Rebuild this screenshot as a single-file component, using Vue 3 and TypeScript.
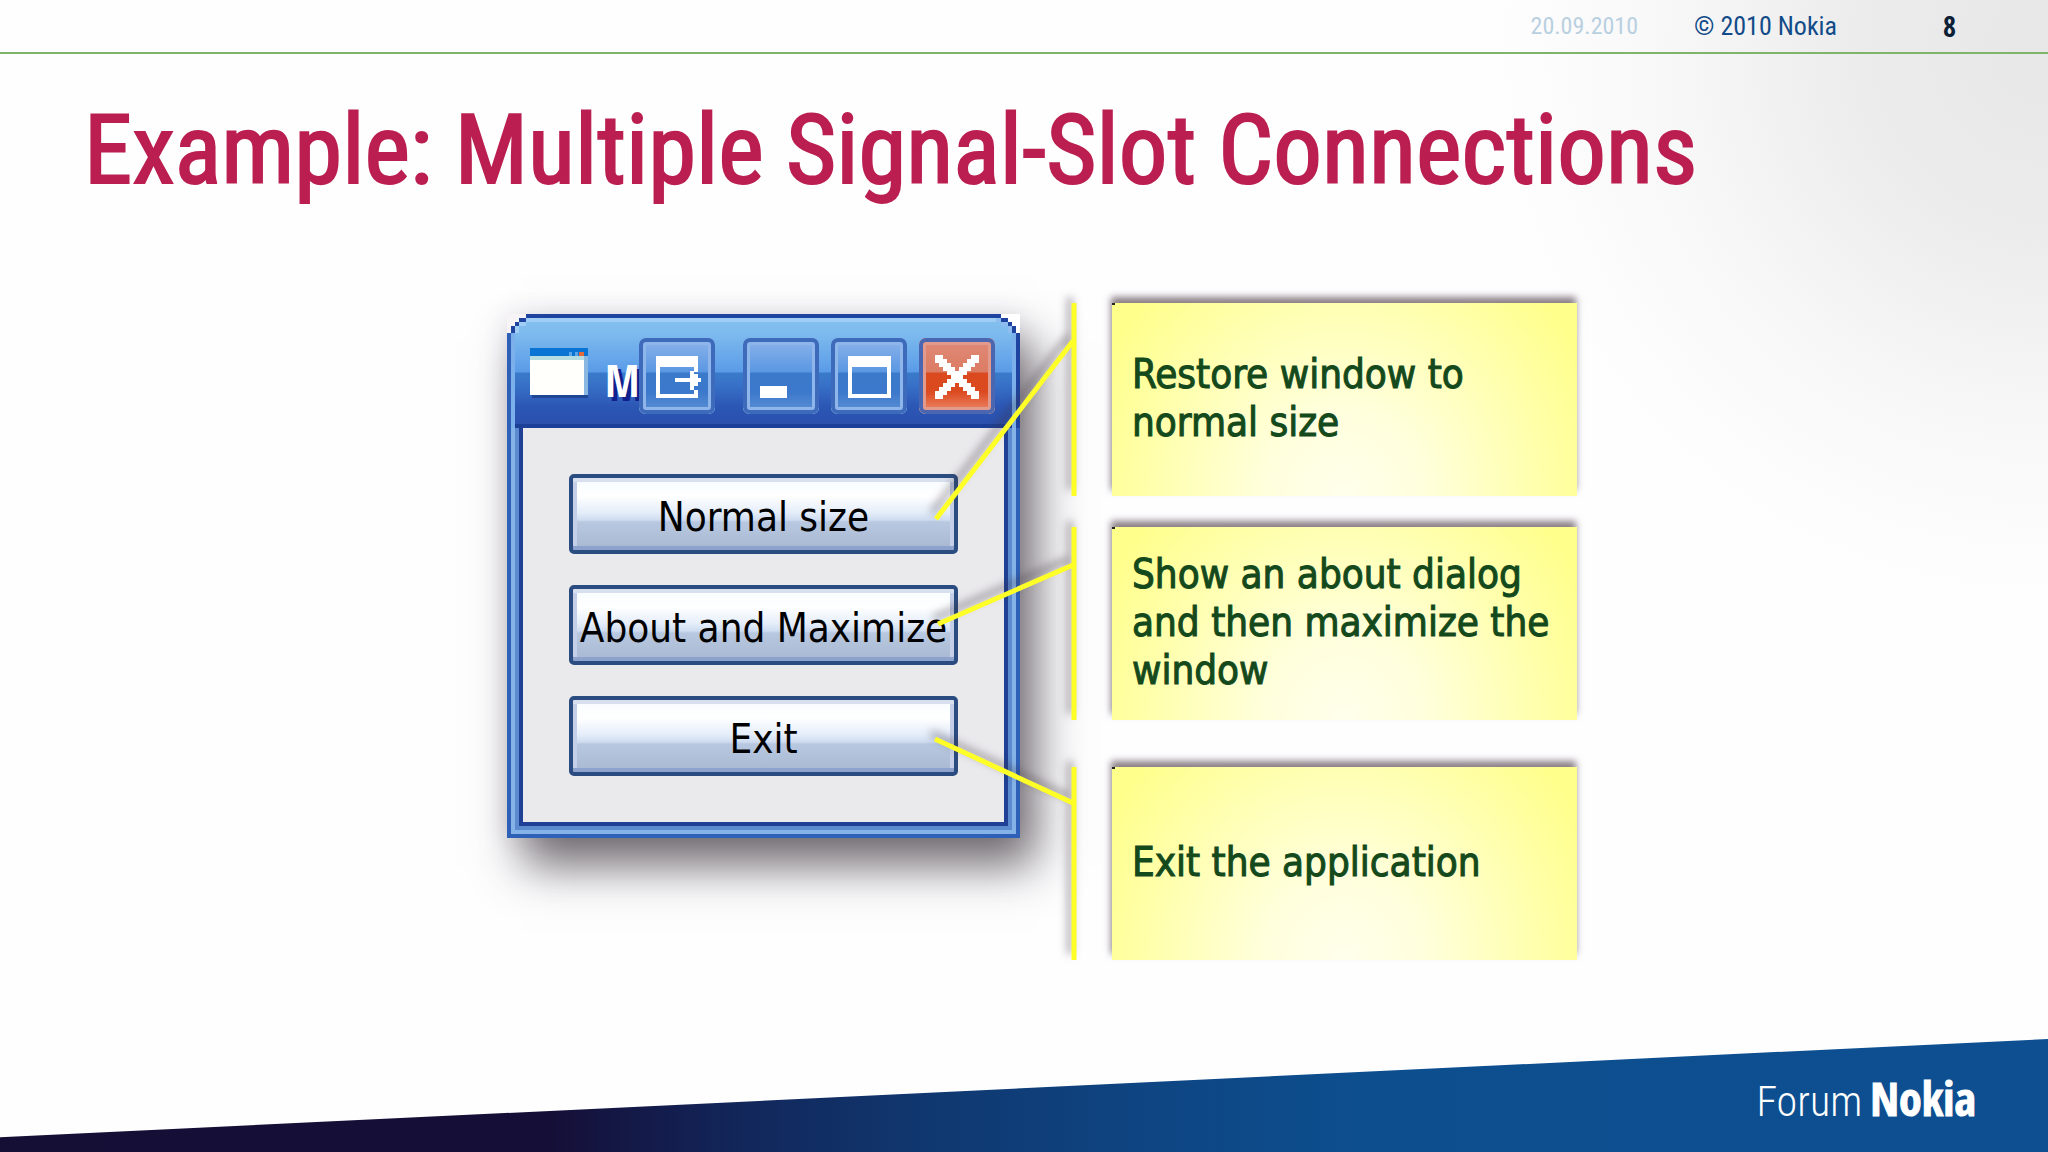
<script setup lang="ts">
interface Note {
  id: string
  text: string
}

interface Point {
  x: number
  y: number
}

interface Connector {
  id: string
  bar: { top: number; bottom: number }
  from: Point
  to: Point
}

const title = 'Example: Multiple Signal-Slot Connections'

const actions: string[] = ['Normal size', 'About and Maximize', 'Exit']

const notes: Note[] = [
  { id: 'restore', text: 'Restore window to normal size' },
  { id: 'about', text: 'Show an about dialog and then maximize the window' },
  { id: 'exit', text: 'Exit the application' },
]

// Coordinates are relative to the diagram's top left corner.
const connectors: Connector[] = [
  { id: 'restore', bar: { top: 0, bottom: 193 }, from: { x: 566, y: 38 }, to: { x: 429, y: 216 } },
  { id: 'about', bar: { top: 224, bottom: 417 }, from: { x: 566, y: 262 }, to: { x: 431, y: 321 } },
  { id: 'exit', bar: { top: 464, bottom: 657 }, from: { x: 566, y: 500 }, to: { x: 428, y: 436 } },
]

// Rows of the stair-stepped cross on the close button.
const crossCells: { x: number; y: number; w: number }[] = []
for (let row = 0; row < 11; row++) {
  for (const col of [row, 10 - row]) {
    const start = Math.max(0, col - 1)
    const end = Math.min(10, col + 1)
    crossCells.push({ x: 16 + start * 4, y: 17 + row * 4, w: (end - start + 1) * 4 })
  }
}
</script>

<template>
  <main class="slide">
    <header class="topbar">
      <span class="date">20.09.2010</span>
      <span class="copyright">© 2010 Nokia</span>
      <span class="page">8</span>
    </header>

    <h1 class="title">{{ title }}</h1>

    <section class="stage">
      <div class="diagram">
        <div class="window">
          <div class="titlebar">
            <svg class="corner" viewBox="0 0 24 24" aria-hidden="true">
              <path d="M0 0H19V4H12V8H8V12H4V19H0Z" fill="#f6f4f7" />
              <path d="M19 0H24V4H19V8H12V4H19ZM8 8H12V12H8ZM4 12H8V19H4Z" fill="#1f449f" />
              <path d="M19 4H24V8H19ZM12 8H19V12H12ZM8 12H12V19H8Z" fill="#9fcdf5" />
            </svg>
            <svg class="corner corner-right" viewBox="0 0 24 24" aria-hidden="true">
              <path d="M0 0H19V4H12V8H8V12H4V19H0Z" fill="#ffffff" />
              <path d="M19 0H24V4H19V8H12V4H19ZM8 8H12V12H8ZM4 12H8V19H4Z" fill="#1f449f" />
              <path d="M19 4H24V8H19ZM12 8H19V12H12ZM8 12H12V19H8Z" fill="#8fbdf0" />
            </svg>

            <svg class="app-icon" viewBox="0 0 58 50" aria-hidden="true">
              <rect x="2" y="4" width="56" height="46" fill="#1f4796" />
              <rect width="58" height="9" fill="#0a74d4" />
              <rect x="39" y="4" width="3" height="4" fill="#5ba6e6" />
              <rect x="45" y="4" width="3" height="4" fill="#5ba6e6" />
              <rect x="49" y="4" width="5" height="4" fill="#e56a3a" />
              <rect y="8" width="54" height="39" fill="#fffffb" />
              <rect y="8" width="54" height="4" fill="#b5dce0" />
              <rect x="54" y="8" width="4" height="39" fill="#8ab8e0" />
            </svg>
            <span class="caption">M</span>

            <button class="control" type="button" aria-label="Send to">
              <svg viewBox="0 0 76 76" aria-hidden="true">
                <path
                  fill="#fff"
                  d="M17 18H59V34H55V29H21V56H55V52H59V60H17ZM36 40H51V33H55V36H59V40H62V44H59V48H55V52H51V44H36Z"
                />
              </svg>
            </button>
            <div class="controls">
              <button class="control" type="button" aria-label="Minimize">
                <svg viewBox="0 0 76 76" aria-hidden="true">
                  <rect x="17" y="48" width="27" height="12" fill="#fff" />
                </svg>
              </button>
              <button class="control" type="button" aria-label="Maximize">
                <svg viewBox="0 0 76 76" aria-hidden="true">
                  <path fill="#fff" fill-rule="evenodd" d="M17 18H60V60H17ZM21 29V56H56V29Z" />
                </svg>
              </button>
              <button class="control close" type="button" aria-label="Close">
                <svg viewBox="0 0 76 76" aria-hidden="true">
                  <rect
                    v-for="(cell, i) in crossCells"
                    :key="i"
                    :x="cell.x"
                    :y="cell.y"
                    :width="cell.w"
                    height="4"
                    fill="#fff"
                  />
                </svg>
              </button>
            </div>
          </div>

          <div class="client">
            <button v-for="label in actions" :key="label" class="push" type="button">{{ label }}</button>
          </div>
        </div>

        <div class="notes">
          <p v-for="note in notes" :key="note.id" class="note">{{ note.text }}</p>
        </div>

        <svg class="connectors" aria-hidden="true">
          <g v-for="c in connectors" :key="c.id">
            <line x1="567" :y1="c.bar.top" x2="567" :y2="c.bar.bottom" />
            <line :x1="c.from.x" :y1="c.from.y" :x2="c.to.x" :y2="c.to.y" />
          </g>
        </svg>
      </div>
    </section>

    <footer class="footer">
      <div class="logo"><span class="logo-light">Forum</span><span class="logo-bold">Nokia</span></div>
    </footer>
  </main>
</template>

<style>
body {
  margin: 0;
}
</style>

<style scoped>
.slide {
  display: flex;
  flex-direction: column;
  min-height: 100vh;
  overflow: hidden;
  background: radial-gradient(ellipse 27% 48% at 100% 4%, #e7e7e7 0%, #ececed 35%, #f8f8f9 70%, #fefeff 100%);
  font-family: "DejaVu Sans Condensed", "Noto Sans", sans-serif;
}

.topbar {
  display: flex;
  align-items: center;
  justify-content: flex-end;
  height: 52px;
  padding-right: 92px;
  border-bottom: 2px solid #7fb46a;
  font: 24px/52px "Roboto Condensed", "Noto Sans", sans-serif;
}

.date {
  color: #b9d0e0;
}

.copyright {
  margin: 0 106px 0 56px;
  color: #114b88;
  font-size: 26px;
}

.page {
  color: #0c2036;
  font: 700 28px/52px "Open Sans Condensed", "Noto Sans", sans-serif;
}

.title {
  margin: 0;
  padding: 36px 84px 0;
  color: #bb1e50;
  font: 400 97px/120px "Roboto Condensed", "Noto Sans", sans-serif;
  -webkit-text-stroke: 2px #bb1e50;
}

.stage {
  display: flex;
  justify-content: center;
  padding: 93px 0 40px 36px;
}

.diagram {
  position: relative;
  display: flex;
  gap: 92px;
}

.window {
  align-self: flex-start;
  width: 513px;
  margin-top: 11px;
  background: #fff;
  box-shadow: 16px 28px 44px rgba(45, 38, 45, 0.68), 0 0 24px rgba(60, 40, 70, 0.1);
}

.titlebar {
  position: relative;
  display: flex;
  align-items: flex-start;
  box-sizing: border-box;
  height: 114px;
  padding: 24px 25px 0 23px;
  background: linear-gradient(#86c4ee 0, #7dbaee 20px, #5a9be8 58px, #3a7aca 59px, #3872c8 70px, #2c57b5 92px, #2b50ae 110px, #1c3f97 110px);
  box-shadow: inset 0 4px #1f449f, inset 4px 0 #2e60b8, inset -4px 0 #1f449f, inset 0 8px #9fcdf5, inset 8px 0 #7cb0ea, inset -8px 0 #7cb0ea;
}

.corner {
  position: absolute;
  top: 0;
  left: 0;
  width: 24px;
  height: 24px;
  shape-rendering: crispEdges;
}

.corner-right {
  right: 0;
  left: auto;
  transform: scaleX(-1);
}

.app-icon {
  width: 58px;
  height: 50px;
  margin: 10px 17px 0 0;
  shape-rendering: crispEdges;
}

.caption {
  width: 34px;
  color: #fff;
  font: 700 44px/84px "Open Sans Condensed", "Noto Sans", sans-serif;
  text-shadow: 4px 4px #10208c;
}

.controls {
  display: flex;
  gap: 12px;
  margin-left: auto;
}

.control {
  position: relative;
  flex: none;
  width: 76px;
  height: 76px;
  padding: 0;
  border: 0;
  border-radius: 7px;
  background: linear-gradient(#8db4ea 0, #6fa3e6 20px, #5a97e2 34px, #3b7aca 35px, #3c78cc 54px, #5f93d4 76px);
  box-shadow: inset 0 0 0 4px #3d6abb, inset 0 -4px #a5d0f2, inset 0 0 0 7px #8fb6ea;
}

.control svg {
  display: block;
  width: 76px;
  height: 76px;
  shape-rendering: crispEdges;
}

.close {
  background: linear-gradient(#e08a78 0, #dc7c64 34px, #da4a1e 35px, #dc4a20 54px, #ee9070 76px);
  box-shadow: inset 0 0 0 4px #4a66b0, inset 0 -4px #f0c4b8, inset 0 0 0 7px #e29a8c;
}

.client {
  display: flex;
  flex-direction: column;
  gap: 31px;
  padding: 46px 62px 62px;
  background: #eae9ec;
  box-shadow: inset 4px 0 #2e60b8, inset -4px 0 #2e60b8, inset 0 -4px #2e60b8,
    inset 8px 0 #85b3e8, inset -8px 0 #85b3e8, inset 0 -8px #85b3e8,
    inset 12px 0 #5b8ace, inset -12px 0 #5b8ace, inset 0 -12px #5b8ace,
    inset 16px 0 #1f4094, inset -16px 0 #1f4094, inset 0 -16px #1f4094;
}

.push {
  height: 80px;
  padding: 6px 0 0;
  border: 4px solid #2a4c80;
  border-radius: 5px;
  background: linear-gradient(#f6fcff 0, #ffffff 18px, #e6eefa 34px, #cfdcf0 42px, #b8c8e0 44px, #a9b8d2 72px);
  box-shadow: inset 0 4px #d8e0f0, inset 0 -4px #8da2cc, inset 4px 0 #c5d0e8, inset -4px 0 #c5d0e8;
  color: #000;
  font: 40px/48px "DejaVu Sans Condensed", "Noto Sans", sans-serif;
  white-space: nowrap;
}

.notes {
  display: flex;
  flex-direction: column;
  gap: 31px;
}

.note {
  position: relative;
  display: flex;
  align-items: center;
  box-sizing: border-box;
  width: 465px;
  height: 193px;
  margin: 0;
  padding: 0 20px 4px;
  background: radial-gradient(ellipse 58% 150% at 50% 100%, #ffffec 0%, #ffffdc 30%, #ffffb4 65%, #ffff8c 100%);
  box-shadow: -1px -6px 7px rgba(60, 42, 52, 0.6);
  color: #14491c;
  font-size: 40px;
  line-height: 48px;
  -webkit-text-stroke: 1px #14491c;
}

.note::before {
  position: absolute;
  top: 0;
  left: 0;
  width: 3px;
  height: 2px;
  background: #222;
  content: "";
}

.note:last-child {
  margin-top: 16px;
}

.connectors {
  position: absolute;
  top: 0;
  left: 0;
  width: 100%;
  height: 100%;
  overflow: visible;
  stroke: #ffff28;
  stroke-width: 5px;
  filter: drop-shadow(-4px -6px 4px rgba(60, 50, 60, 0.5));
  pointer-events: none;
}

.footer {
  display: flex;
  align-items: flex-end;
  justify-content: flex-end;
  box-sizing: border-box;
  height: 113px;
  margin-top: auto;
  padding: 0 72px 18px;
  background: linear-gradient(90deg, #150f36 0%, #150f38 27%, #12265a 36%, #10376f 45%, #0e4582 56%, #0d4e8e 66%, #0d4f91 100%);
  clip-path: polygon(0 87%, 100% 0, 100% 100%, 0 100%);
}

.logo {
  display: flex;
  align-items: baseline;
  gap: 8px;
  color: #fff;
}

.logo-light {
  font: 300 42px/64px "Roboto Condensed", "Noto Sans", sans-serif;
}

.logo-bold {
  font: 700 46px/64px "Open Sans Condensed", "Noto Sans", sans-serif;
  -webkit-text-stroke: 1px #fff;
}
</style>
